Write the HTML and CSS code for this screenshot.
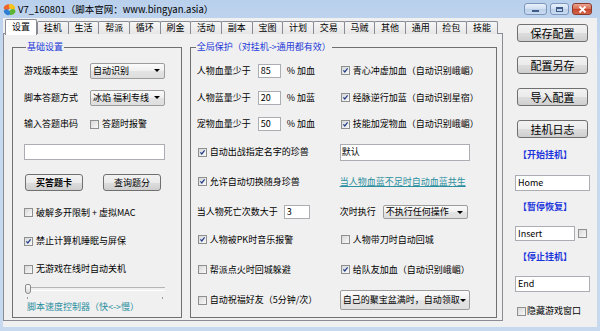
FILE: index.html
```html
<!DOCTYPE html>
<html lang="zh-CN">
<head>
    <meta charset="UTF-8">
    <meta name="viewport" content="width=device-width, initial-scale=1.0">
    <title>V7_160801</title>
    <link rel="stylesheet" href="styles.css">
</head>
<body>

<div class="window">
    <div class="titlebar">
        <svg class="app-icon" width="13" height="13" viewBox="0 0 13 13">
            <ellipse cx="4.2" cy="4.2" rx="3.6" ry="2.6" transform="rotate(-30 4.2 4.2)" fill="#f0642a"/>
            <ellipse cx="9" cy="4" rx="3.4" ry="2.4" transform="rotate(40 9 4)" fill="#f7c21a"/>
            <ellipse cx="9" cy="9" rx="3.6" ry="2.6" transform="rotate(-30 9 9)" fill="#5cb531"/>
            <ellipse cx="4" cy="9.2" rx="3.4" ry="2.4" transform="rotate(40 4 9.2)" fill="#2f7fd6"/>
        </svg>
        <span class="title">V7_160801（脚本官网：www.bingyan.asia）</span>
        <div class="caption">
            <span class="cap-btn min"><i></i></span>
            <span class="cap-btn max"><i></i></span>
            <span class="cap-btn close">
                <svg width="9" height="7" viewBox="0 0 9 7"><path d="M1.5 0.5 L7.5 6.5 M7.5 0.5 L1.5 6.5" stroke="#fff" stroke-width="1.8"/></svg>
            </span>
        </div>
    </div>

    <div class="client">
        <div class="tabctl">
            <div class="tabs">
                <span class="tab active">设置</span>
                <span class="tab">挂机</span>
                <span class="tab">生活</span>
                <span class="tab">帮派</span>
                <span class="tab">循环</span>
                <span class="tab">刷金</span>
                <span class="tab">活动</span>
                <span class="tab">副本</span>
                <span class="tab">宝图</span>
                <span class="tab">计划</span>
                <span class="tab">交易</span>
                <span class="tab">马贼</span>
                <span class="tab">其他</span>
                <span class="tab">通用</span>
                <span class="tab">捡包</span>
                <span class="tab">技能</span>
            </div>

            <div class="pane">
                <!-- 基础设置 -->
                <fieldset class="group basic">
                    <legend>基础设置</legend>
                    <div class="group-body">
                        <div class="row h27">
                            <span class="lbl w66">游戏版本类型</span>
                            <span class="combo w75">自动识别</span>
                        </div>
                        <div class="row h27">
                            <span class="lbl w66">脚本答题方式</span>
                            <span class="combo w75">冰焰 福利专线</span>
                        </div>
                        <div class="row h26">
                            <span class="lbl w66">输入答题串码</span>
                            <span class="cb"></span>
                            <span class="cb-text">答题时报警</span>
                        </div>
                        <div class="row h30">
                            <span class="edit wide"></span>
                        </div>
                        <div class="row h31">
                            <span class="btn small bold">买答题卡</span>
                            <span class="btn small second">查询题分</span>
                        </div>
                        <div class="row h29">
                            <span class="cb"></span>
                            <span class="cb-text">破解多开限制 + 虚拟MAC</span>
                        </div>
                        <div class="row h28">
                            <span class="cb on"><svg viewBox="0 0 9 9"><path d="M1.8 4.3 L3.6 6.4 L7.2 1.8"/></svg></span>
                            <span class="cb-text">禁止计算机睡眠与屏保</span>
                        </div>
                        <div class="row h28">
                            <span class="cb"></span>
                            <span class="cb-text">无游戏在线时自动关机</span>
                        </div>
                        <div class="row h17">
                            <div class="slider"><span class="thumb"></span></div>
                        </div>
                        <div class="row h14">
                            <span class="teal speed">脚本速度控制器（快&lt;-&gt;慢）</span>
                        </div>
                    </div>
                </fieldset>

                <!-- 全局保护 -->
                <fieldset class="group protect">
                    <legend>全局保护（对挂机-&gt;通用都有效）</legend>
                    <div class="grid">
                        <div class="cell">
                            <span class="lbl w61">人物血量少于</span>
                            <span class="edit num">85</span>
                            <span class="unit">% 加血</span>
                        </div>
                        <div class="cell">
                            <span class="cb on"><svg viewBox="0 0 9 9"><path d="M1.8 4.3 L3.6 6.4 L7.2 1.8"/></svg></span>
                            <span class="cb-text">青心冲虚加血（自动识别峨嵋）</span>
                        </div>

                        <div class="cell">
                            <span class="lbl w61">人物蓝量少于</span>
                            <span class="edit num">20</span>
                            <span class="unit">% 加蓝</span>
                        </div>
                        <div class="cell">
                            <span class="cb on"><svg viewBox="0 0 9 9"><path d="M1.8 4.3 L3.6 6.4 L7.2 1.8"/></svg></span>
                            <span class="cb-text">经脉逆行加蓝（自动识别星宿）</span>
                        </div>

                        <div class="cell">
                            <span class="lbl w61">宠物血量少于</span>
                            <span class="edit num">50</span>
                            <span class="unit">% 加血</span>
                        </div>
                        <div class="cell">
                            <span class="cb on"><svg viewBox="0 0 9 9"><path d="M1.8 4.3 L3.6 6.4 L7.2 1.8"/></svg></span>
                            <span class="cb-text">技能加宠物血（自动识别峨嵋）</span>
                        </div>

                        <div class="cell">
                            <span class="cb on"><svg viewBox="0 0 9 9"><path d="M1.8 4.3 L3.6 6.4 L7.2 1.8"/></svg></span>
                            <span class="cb-text">自动出战指定名字的珍兽</span>
                        </div>
                        <div class="cell">
                            <span class="edit name">默认</span>
                        </div>

                        <div class="cell">
                            <span class="cb on"><svg viewBox="0 0 9 9"><path d="M1.8 4.3 L3.6 6.4 L7.2 1.8"/></svg></span>
                            <span class="cb-text">允许自动切换随身珍兽</span>
                        </div>
                        <div class="cell">
                            <span class="teal link">当人物血蓝不足时自动血蓝共生</span>
                        </div>

                        <div class="cell">
                            <span class="lbl">当人物死亡次数大于</span>
                            <span class="edit count">3</span>
                        </div>
                        <div class="cell">
                            <span class="lbl">次时执行</span>
                            <span class="combo action">不执行任何操作</span>
                        </div>

                        <div class="cell">
                            <span class="cb on"><svg viewBox="0 0 9 9"><path d="M1.8 4.3 L3.6 6.4 L7.2 1.8"/></svg></span>
                            <span class="cb-text">人物被PK时音乐报警</span>
                        </div>
                        <div class="cell">
                            <span class="cb"></span>
                            <span class="cb-text">人物带刀时自动回城</span>
                        </div>

                        <div class="cell">
                            <span class="cb"></span>
                            <span class="cb-text">帮派点火时回城躲避</span>
                        </div>
                        <div class="cell">
                            <span class="cb on"><svg viewBox="0 0 9 9"><path d="M1.8 4.3 L3.6 6.4 L7.2 1.8"/></svg></span>
                            <span class="cb-text">给队友加血（自动识别峨嵋）</span>
                        </div>

                        <div class="cell">
                            <span class="cb"></span>
                            <span class="cb-text">自动祝福好友（5分钟/次）</span>
                        </div>
                        <div class="cell">
                            <span class="combo treasure">自己的聚宝盆满时，自动领取</span>
                        </div>
                    </div>
                </fieldset>
            </div>
        </div>

        <div class="side">
            <span class="btn big first">保存配置</span>
            <span class="btn big">配置另存</span>
            <span class="btn big">导入配置</span>
            <span class="btn big">挂机日志</span>

            <span class="hotkey-title first-title">【开始挂机】</span>
            <span class="edit key">Home</span>
            <span class="hotkey-title">【暂停恢复】</span>
            <div class="key-row">
                <span class="edit key short">Insert</span>
                <span class="cb"></span>
            </div>
            <span class="hotkey-title">【停止挂机】</span>
            <span class="edit key">End</span>
            <div class="hide-row">
                <span class="cb"></span>
                <span class="hide-text">隐藏游戏窗口</span>
            </div>
        </div>
    </div>
</div>

</body>
</html>
```

FILE: styles.css
```css
* {
    box-sizing: border-box;
}

body {
    margin: 0;
    width: 600px;
    height: 331px;
    overflow: hidden;
    font-family: "Noto Sans CJK SC", "Noto Sans", sans-serif;
    font-size: 9px;
    line-height: 12px;
    color: #000;
    background: #c4d8ef;
}

.window {
    height: 331px;
    display: flex;
    flex-direction: column;
    padding: 0 3px 4px 3px;
    background: linear-gradient(#b9d0ec, #c8daf0 60px, #c6d9ef);
}

/* title bar */
.titlebar {
    height: 18px;
    display: flex;
    align-items: center;
    flex: none;
}

.app-icon {
    margin-right: 2px;
    flex: none;
}

.title {
    font-size: 9.5px;
    white-space: nowrap;
}

.caption {
    margin-left: auto;
    margin-right: 5px;
    align-self: flex-start;
    margin-top: 3px;
    display: flex;
    gap: 3px;
}

.cap-btn {
    height: 12px;
    border: 1px solid #7d97bd;
    border-radius: 3px;
    background: linear-gradient(#e9f1fb, #cfdef1 50%, #bcd0ea 51%, #c9dbf1);
    display: flex;
    align-items: center;
    justify-content: center;
}

.cap-btn.min {
    width: 23px;
}

.cap-btn.min i {
    width: 7px;
    height: 2px;
    margin-top: 3px;
    background: #3e5a86;
}

.cap-btn.max {
    width: 19px;
}

.cap-btn.max i {
    width: 7px;
    height: 5px;
    border: 1px solid #3e5a86;
    border-top-width: 2px;
}

.cap-btn.close {
    width: 20px;
    border-color: #8d3a2c;
    background: linear-gradient(#eaa693, #d86a4f 50%, #c7432a 51%, #d2664b);
}

/* client area */
.client {
    flex: 1;
    display: flex;
    background: #f0f0f0;
}

.tabctl {
    width: 500px;
    display: flex;
    flex-direction: column;
}

.tabs {
    height: 16px;
    display: flex;
    align-items: flex-end;
    padding-left: 2px;
    position: relative;
    z-index: 1;
}

.tab {
    width: 31.67px;
    height: 13px;
    margin-right: -1px;
    border: 1px solid #898c95;
    border-bottom: none;
    border-radius: 2px 2px 0 0;
    background: linear-gradient(#f6f6f6, #e6e6e6);
    text-align: center;
    line-height: 12px;
    flex: none;
}

.tab.active {
    width: 32px;
    height: 16px;
    margin-right: 0;
    margin-bottom: -1px;
    background: #fff;
    position: relative;
    z-index: 2;
    line-height: 14px;
}

.pane {
    height: 288px;
    margin-top: -1px;
    border: 1px solid #898c95;
    background: #f0f0f0;
    display: flex;
    gap: 8px;
    padding: 7px 5px 2px 8px;
}

/* group boxes */
.group {
    margin: 0;
    padding: 0;
    min-width: 0;
    border: 1px solid #707070;
}

.group legend {
    margin-left: 13px;
    padding: 0 1px;
    color: #1c3ad8;
    line-height: 12px;
}

.group.basic {
    width: 170px;
}

.group.protect {
    width: 308px;
}

.group.protect legend {
    margin-left: 5px;
}

.group-body {
    padding: 4px 0 0 11px;
}

.row {
    display: flex;
    align-items: center;
}

.h14 { height: 14px; }
.h17 { height: 17px; }
.h26 { height: 26px; }
.h27 { height: 27px; }
.h28 { height: 28px; }
.h29 { height: 29px; }
.h30 { height: 30px; }
.h31 { height: 31px; }

.lbl {
    white-space: nowrap;
    flex: none;
}

.w61 { width: 61px; }
.w66 { width: 66px; }

/* controls */
.combo {
    display: flex;
    align-items: center;
    height: 16px;
    padding-left: 2px;
    border: 1px solid #9c9c9c;
    border-radius: 2px;
    background: linear-gradient(#fbfbfb, #efefef 50%, #e3e3e3 51%, #dedede);
    white-space: nowrap;
    flex: none;
}

.combo::after {
    content: "";
    margin-left: auto;
    margin-right: 4px;
    border-left: 3px solid transparent;
    border-right: 3px solid transparent;
    border-top: 3px solid #000;
}

.w75 { width: 75px; }

.combo.action {
    width: 85px;
    height: 14px;
    margin-left: 7px;
}

.combo.treasure {
    width: 130px;
    height: 20px;
    padding-left: 2px;
}

.edit {
    display: flex;
    align-items: center;
    height: 16px;
    padding-left: 2px;
    border: 1px solid #abadb3;
    background: #fff;
    white-space: nowrap;
    flex: none;
}

.edit.wide {
    width: 141px;
}

.edit.num {
    width: 23px;
    height: 14px;
}

.edit.count {
    width: 26px;
    height: 14px;
    margin-left: 6px;
}

.edit.name {
    width: 130px;
    height: 17px;
    padding-left: 1px;
}

.unit {
    margin-left: 6px;
}

.cb {
    width: 9px;
    height: 9px;
    border: 1px solid #8e8f8f;
    background: linear-gradient(135deg, #d8d8d8, #f9f9f9);
    flex: none;
    display: flex;
}

.cb svg {
    width: 7px;
    height: 7px;
}

.cb path {
    fill: none;
    stroke: #1f3c88;
    stroke-width: 1.5;
}

.cb-text {
    margin-left: 3px;
    white-space: nowrap;
}

.row .cb:first-child {
    margin-left: 0;
}

.btn {
    display: flex;
    align-items: center;
    justify-content: center;
    border: 1px solid #707070;
    border-radius: 3px;
    background: linear-gradient(#f2f2f2, #ebebeb 50%, #dddddd 51%, #cfcfcf);
    white-space: nowrap;
    flex: none;
}

.btn.small {
    width: 58px;
    height: 17px;
    margin-left: 1px;
}

.btn.small.second {
    margin-left: 20px;
}

.bold {
    font-weight: bold;
}

.slider {
    position: relative;
    width: 140px;
    height: 17px;
    margin-left: 1px;
}

.slider::before {
    content: "";
    position: absolute;
    left: 0;
    right: 0;
    top: 4px;
    height: 2px;
    border-top: 1px solid #b5b5b5;
    border-bottom: 1px solid #fff;
}

.slider::after {
    content: "";
    position: absolute;
    left: 2px;
    right: 2px;
    top: 14px;
    height: 2px;
    border-left: 1px solid #9a9a9a;
    border-right: 1px solid #9a9a9a;
}

.thumb {
    position: absolute;
    left: 0;
    top: 1px;
    width: 6px;
    height: 10px;
    border: 1px solid #8a8a8a;
    border-radius: 2px 2px 3px 3px;
    background: linear-gradient(#fafafa, #dcdcdc);
}

.teal {
    color: #2a8f9f;
    white-space: nowrap;
}

.speed {
    margin-left: 3px;
}

.link {
    text-decoration: underline;
}

/* protect grid */
.grid {
    display: grid;
    grid-template-columns: 143px 1fr;
    grid-template-rows: 27px 27px 26px 30px 29px 32px 23px 37px 24px;
    padding: 4px 0 0 6px;
}

.cell {
    display: flex;
    align-items: center;
}

.grid .cell > .cb:first-child {
    margin-left: 1px;
}

/* side column */
.side {
    width: 75px;
    margin-left: 12px;
    display: flex;
    flex-direction: column;
    align-items: flex-start;
}

.btn.big {
    width: 71px;
    height: 18px;
    margin: 14px 0 0 2px;
    font-size: 11px;
}

.btn.big.first {
    margin-top: 6px;
}

.hotkey-title {
    margin: 10px 0 0 3px;
    color: #1b35dc;
    font-weight: bold;
    line-height: 12px;
}

.hotkey-title.first-title {
    margin-top: 11px;
}

.edit.key {
    width: 75px;
    height: 16px;
    margin-top: 13px;
}

.hotkey-title.first-title + .edit.key {
    margin-top: 14px;
}

.key-row {
    display: flex;
    align-items: center;
    margin-top: 13px;
    gap: 3px;
}

.key-row .edit.key.short {
    width: 60px;
    height: 15px;
    margin-top: 0;
}

.hide-row {
    display: flex;
    align-items: center;
    margin: 13px 0 0 2px;
}

.hide-text {
    margin-left: 1px;
}
```
